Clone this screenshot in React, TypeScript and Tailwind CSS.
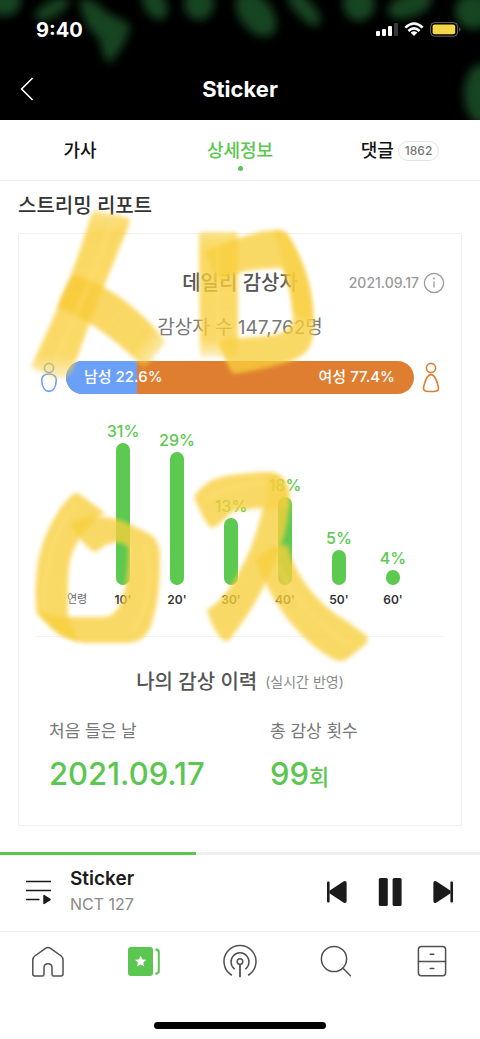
import { useState } from "react";
import type { ReactNode } from "react";

const TABS = [
  { id: "lyrics", label: "가사" },
  { id: "detail", label: "상세정보" },
  { id: "comments", label: "댓글", count: 1862 },
];

const AGES = [
  { age: "10'", percent: 31, height: 142 },
  { age: "20'", percent: 29, height: 133 },
  { age: "30'", percent: 13, height: 67 },
  { age: "40'", percent: 18, height: 88 },
  { age: "50'", percent: 5, height: 35 },
  { age: "60'", percent: 4, height: 15 },
];

const LISTENERS = { male: 22.6, female: 77.4 };

function HeaderBackdrop() {
  return (
    <svg
      className="absolute inset-0 h-full w-full"
      viewBox="0 0 480 120"
      preserveAspectRatio="none"
      aria-hidden="true"
    >
      <defs>
        <filter id="leaf-blur" x="-60%" y="-60%" width="220%" height="220%">
          <feGaussianBlur stdDeviation="5" />
        </filter>
      </defs>
      <g fill="#174520">
        <ellipse filter="url(#leaf-blur)" cx="4" cy="2" rx="17" ry="14" />
        <ellipse filter="url(#leaf-blur)" cx="52" cy="9" rx="19" ry="8" transform="rotate(-30 52 9)" />
        <path filter="url(#leaf-blur)" d="M80 -2 Q94 -2 106 12 L130 24 Q128 44 109 64 Q101 54 100 40 Q80 22 80 -2Z" />
        <ellipse filter="url(#leaf-blur)" cx="155" cy="4" rx="11" ry="17" transform="rotate(-30 155 4)" />
        <ellipse filter="url(#leaf-blur)" cx="199" cy="4" rx="15" ry="16" />
        <ellipse filter="url(#leaf-blur)" cx="256" cy="14" rx="16" ry="26" transform="rotate(-38 256 14)" />
        <ellipse filter="url(#leaf-blur)" cx="304" cy="8" rx="9" ry="23" transform="rotate(-42 304 8)" />
        <ellipse filter="url(#leaf-blur)" cx="359" cy="4" rx="16" ry="17" />
        <ellipse filter="url(#leaf-blur)" cx="410" cy="5" rx="23" ry="12" transform="rotate(-20 410 5)" />
        <ellipse filter="url(#leaf-blur)" cx="474" cy="11" rx="19" ry="18" />
        <ellipse filter="url(#leaf-blur)" cx="482" cy="94" rx="18" ry="30" />
      </g>
    </svg>
  );
}

function StatusBar() {
  return (
    <div className="relative flex h-[60px] items-center justify-between pr-[18px] pl-9 text-white">
      <span className="text-xl font-bold">9:40</span>
      <svg width="87" height="18" viewBox="375 21 87 18" aria-hidden="true">
        <g fill="currentColor">
          <rect x="376" y="31" width="4" height="5" rx="1" />
          <rect x="382" y="29" width="4" height="7" rx="1" />
          <rect x="388" y="26" width="4" height="10" rx="1" />
          <rect x="394" y="23" width="4" height="13" rx="1" opacity=".22" />
          <path d="M414 36 L410.6 32.6 Q414 29.9 417.4 32.6Z" />
        </g>
        <g fill="none" stroke="currentColor" strokeWidth="2.6">
          <path d="M405.3 27.6 Q414 19.4 422.7 27.6" />
          <path d="M408.4 31 Q414 25.8 419.6 31" />
        </g>
        <rect x="430.6" y="22.6" width="27" height="13.6" rx="4" fill="none" stroke="#fff" strokeOpacity=".4" />
        <rect x="432.6" y="24.6" width="22.6" height="9.6" rx="2" fill="#f5d646" />
        <path d="M459.4 27 Q461.4 29.4 459.4 31.8Z" fill="#fff" opacity=".5" />
      </svg>
    </div>
  );
}

function Person({ female }: { female?: boolean }) {
  return (
    <svg width="18" height="32" viewBox="0 0 18 32" fill="none" strokeWidth="1.6" aria-hidden="true">
      <circle cx="9" cy="6" r="4.6" stroke={female ? "#df7e30" : "#6a9ff8"} />
      {female ? (
        <path
          d="M9 12.6 C12.6 12.6 14.6 17 16.4 25 Q17 28.8 13.6 29.2 Q9 29.8 4.4 29.2 Q1 28.8 1.6 25 C3.4 17 5.4 12.6 9 12.6Z"
          stroke="#df7e30"
        />
      ) : (
        <path
          d="M9 12 C13.6 12 16.4 14.4 16.3 18 C16 24 13.6 29.4 9 29.4 C4.4 29.4 2 24 1.7 18 C1.6 14.4 4.4 12 9 12Z"
          stroke="#6a9ff8"
        />
      )}
    </svg>
  );
}

// Hand-drawn highlighter strokes lying over the report.
function Highlighter() {
  return (
    <svg
      className="pointer-events-none absolute top-0 left-0 w-full"
      viewBox="0 181 480 500"
      aria-hidden="true"
    >
      <defs>
        <filter id="marker-edge" x="-10%" y="-10%" width="120%" height="120%">
          <feGaussianBlur stdDeviation="2" />
        </filter>
        <linearGradient id="fade-down" x1="0" y1="0" x2="0" y2="1">
          <stop offset="0" stopColor="#f8cf3c" stopOpacity=".6" />
          <stop offset=".12" stopColor="#f8cf3c" stopOpacity=".8" />
          <stop offset=".86" stopColor="#f8cf3c" stopOpacity=".78" />
          <stop offset="1" stopColor="#f8cf3c" stopOpacity=".3" />
        </linearGradient>
        <linearGradient id="fade-right" x1="0" y1="0" x2="1" y2=".7">
          <stop offset="0" stopColor="#f9c430" stopOpacity=".75" />
          <stop offset=".3" stopColor="#f8cb38" stopOpacity=".78" />
          <stop offset=".88" stopColor="#f8cf3c" stopOpacity=".8" />
          <stop offset="1" stopColor="#f8cf3c" stopOpacity=".5" />
        </linearGradient>
      </defs>
      <g fill="#f8cf3c" fillOpacity=".79">
        <path filter="url(#marker-edge)" fill="url(#fade-down)" fillOpacity="1" d="M95 211 L127 217 Q131 219 129 225 C112 266 92 315 72 372 Q64 381 52 378 L31 367 C52 322 76 268 91 215 Q92 211 95 211Z" />
        <path filter="url(#marker-edge)" fill="url(#fade-right)" fillOpacity="1" d="M75 275 C108 286 136 305 163 338 Q166 342 163 345 L148 364 Q144 369 139 363 C116 340 92 322 58 307 Q64 288 75 275Z" />
        <path filter="url(#marker-edge)" fill="url(#fade-down)" fillOpacity="1" d="M203 232 H235 Q238 232 238 236 L238 352 Q237 357 233 357 H204 Q200 357 200 353 L199 236 Q199 232 203 232Z" />
        <path filter="url(#marker-edge)" d="M206 252 C222 243 246 235 264 231 Q280 229 286 233 C302 256 313 289 313 320 C316 349 305 357 285 363 C268 368 250 371 234 374 Q230 373 218 342 C240 336 262 338 278 334 Q294 330 293 314 C292 294 289 281 282 268 C258 268 240 271 217 280Z" />
        <path filter="url(#marker-edge)" fillOpacity=".6" d="M274 231 Q282 229 287 234 C302 256 314 289 313 324 Q305 318 293 312 C292 288 281 258 274 231Z" />
        <path filter="url(#marker-edge)" d="M73 494 Q77 492 81 495 L105 513 C88 522 76 541 70 560 C67 579 68 598 68 617 L78 640 Q59 638 49 626 L37 614 Q34 594 37 569 C41 538 57 508 73 494Z" />
        <path filter="url(#marker-edge)" d="M70 524 C86 514 106 515 123 521 L150 534 Q160 541 160 556 C160 576 159 598 154 615 C150 634 142 643 126 643 L84 643 C66 641 52 627 37 610 Q50 617 68 617 L104 617 Q114 616 120 605 C127 590 128 566 128 547 C119 539 108 541 96 552 Q86 550 70 524Z" />
        <path filter="url(#marker-edge)" d="M194 497 C202 485 212 479 221 477 C238 473 256 472 272 472 Q288 477 289 492 C290 514 286 534 278 554 C269 580 251 613 230 639 Q226 644 221 638 Q212 628 207 610 C220 602 231 588 240 570 C252 549 258 528 263 508 Q248 509 234 511 C226 516 220 525 213 528 Q207 529 194 497Z" />
        <path filter="url(#marker-edge)" fillOpacity=".45" d="M267 478 Q273 472 280 477 Q287 485 290 508 L266 510 Q266 493 267 478Z" />
        <path filter="url(#marker-edge)" d="M256 560 Q268 545 288 545 C292 570 316 604 345 620 L366 635 Q369 638 366 644 L347 659 Q340 663 333 659 C302 642 272 606 256 560Z" />
      </g>
      {/* bristle marks */}
      <g filter="url(#marker-edge)" stroke="#ffe88c" strokeWidth="3" fill="none" opacity=".3">
        <path d="M112 222 Q88 290 53 365" />
        <path d="M218 240 V350" />
        <path d="M45 610 Q40 550 75 505 M145 545 Q157 600 132 630" />
        <path d="M205 500 Q230 485 270 482 M278 565 Q303 620 352 645" />
      </g>
    </svg>
  );
}

function AgeChart() {
  return (
    <div className="mt-[27px] flex items-end px-[23px]">
      <span className="flex h-[29px] w-[54px] items-center justify-center pl-4 text-[11px] text-[#666]">연령</span>
      {AGES.map(({ age, percent, height }) => (
        <div key={age} className="flex w-[54px] flex-col items-center">
          <span className="text-base leading-5 font-medium text-[#5bc94f]">{percent}%</span>
          <div className="mt-0.5 w-[14px] rounded-full bg-[#5cc951]" style={{ height }} />
          <span className="flex h-[29px] items-center text-xs font-semibold text-[#333]">{age}</span>
        </div>
      ))}
    </div>
  );
}

function Stat({ label, children }: { label: string; children: ReactNode }) {
  return (
    <div>
      <dt className="text-[17px] leading-6 text-[#777]">{label}</dt>
      <dd className="mt-[11px] text-[31px] leading-10 font-medium text-[#5bc650]">{children}</dd>
    </div>
  );
}

function Report() {
  return (
    <section className="rounded-[1px] border border-[#f1f1f1] pb-7">
      <div className="grid grid-cols-[1fr_auto_1fr] items-center px-4 pt-[35px]">
        <h3 className="col-start-2 text-xl leading-7 font-medium text-[#555]">데일리 감상자</h3>
        <div className="flex items-center justify-end gap-1 text-sm font-medium text-[#999]">
          <time>2021.09.17</time>
          <button aria-label="안내">
            <svg width="22" height="22" viewBox="0 0 22 22" fill="none" stroke="#999" strokeWidth="1.3">
              <circle cx="11" cy="11" r="9.6" />
              <path d="M11 9.6 V15.6" />
              <circle cx="11" cy="6.6" r="1" fill="#999" stroke="none" />
            </svg>
          </button>
        </div>
      </div>
      <p className="mt-[17px] text-center text-[19px] leading-7 text-[#777]">감상자 수 147,762명</p>

      <div className="mt-[19px] flex items-center gap-2 px-[21px]">
        <Person />
        <div className="flex h-[33px] min-w-0 flex-1 overflow-hidden rounded-full bg-[#df7e30] text-[15px] font-medium whitespace-nowrap text-white">
          <div className="flex h-full items-center bg-[#6aa0f8] pl-[18px]" style={{ width: "20.4%" }}>
            <span>남성 {LISTENERS.male}%</span>
          </div>
          <span className="ml-auto flex items-center pr-[19px]">여성 {LISTENERS.female}%</span>
        </div>
        <Person female />
      </div>

      <AgeChart />

      <hr className="mx-[17px] mt-[22px] border-[#f4f4f4]" />

      <h3 className="mt-[31px] flex items-center justify-center gap-2 text-xl leading-7 font-medium text-[#555]">
        나의 감상 이력
        <span className="text-sm font-normal text-[#888]">(실시간 반영)</span>
      </h3>
      <dl className="mt-[23px] grid grid-cols-2 pl-[30px]">
        <Stat label="처음 들은 날">2021.09.17</Stat>
        <div className="pl-[15px]">
          <Stat label="총 감상 횟수">
            99<span className="text-[22px]">회</span>
          </Stat>
        </div>
      </dl>
    </section>
  );
}

function Player() {
  const [playing, setPlaying] = useState(true);
  return (
    <div>
      <div className="h-[3px] bg-[#efefef]">
        <div className="h-full bg-[#5bc650]" style={{ width: "40.8%" }} />
      </div>
      <div className="flex h-[77px] items-center border-b border-[#eee] pr-[26px] pb-[3px] pl-[25px] text-[#1b1b1b]">
        <button aria-label="재생목록">
          <svg width="27" height="26" viewBox="0 0 27 26" fill="none" stroke="currentColor" strokeWidth="1.5">
            <path d="M1 2.5 H26 M1 11.5 H26 M1 20.5 H14.5" />
            <path d="M19 16.6 L25 20.5 L19 24.4Z" fill="currentColor" strokeLinejoin="round" />
          </svg>
        </button>
        <div className="ml-[18px] flex flex-col gap-px">
          <span className="text-[19px] leading-6 font-semibold">Sticker</span>
          <span className="text-base leading-6 text-[#888]">NCT 127</span>
        </div>
        <div className="ml-auto flex items-center gap-[29px]">
          <button aria-label="이전 곡">
            <svg width="22" height="24" viewBox="0 0 22 24" fill="currentColor">
              <rect x="1" y="1.6" width="2.6" height="20.8" rx="1" />
              <path d="M3.4 10.7 L17.8 1.2 Q20.6 .2 20.6 3 V21 Q20.6 23.8 17.8 22.8 L3.4 13.3Z" />
            </svg>
          </button>
          <button aria-label={playing ? "일시정지" : "재생"} onClick={() => setPlaying(!playing)}>
            <svg width="26" height="30" viewBox="0 0 26 30" fill="currentColor">
              {playing ? (
                <>
                  <rect x="1.8" y="1" width="9" height="28" rx="1.6" />
                  <rect x="15.6" y="1" width="9" height="28" rx="1.6" />
                </>
              ) : (
                <path d="M3 1 L24 15 L3 29Z" />
              )}
            </svg>
          </button>
          <button aria-label="다음 곡">
            <svg width="22" height="24" viewBox="0 0 22 24" fill="currentColor">
              <rect x="18.4" y="1.6" width="2.6" height="20.8" rx="1" />
              <path d="M18.6 10.7 L4.2 1.2 Q1.4 .2 1.4 3 V21 Q1.4 23.8 4.2 22.8 L18.6 13.3Z" />
            </svg>
          </button>
        </div>
      </div>
    </div>
  );
}

const NAV_ITEMS = [
  {
    label: "홈",
    icon: (
      <path d="M3.6 33 Q1.8 33 1.8 31 V17 Q1.8 14.6 3.8 13 L14.4 5.4 Q17 3.8 19.6 5.4 L30.2 13 Q32 14.6 32 17 V31 Q32 33 30 33 H22.6 Q21 33 21 31.4 V25 Q21 20.8 17 20.8 Q13 20.8 13 25 V31.4 Q13 33 11.4 33Z" />
    ),
  },
  {
    label: "뮤직",
    icon: (
      <g stroke="none" fill="#5bc650">
        <rect x="1" y="4" width="25" height="29" rx="3" />
        <path d="M28.4 5.6 H29.8 Q32.8 6 32.8 9 V28.4 Q32.8 31.4 28.4 31.8 V29.8 Q30.8 29.6 30.8 27.6 V9.6 Q30.8 7.8 28.4 7.4Z" />
        <path
          fill="#fff"
          d="M13.6 12.6 L15.3 16.4 L19.3 16.8 L16.3 19.6 L17.2 23.6 L13.6 21.5 L10 23.6 L10.9 19.6 L7.9 16.8 L11.9 16.4Z"
        />
      </g>
    ),
  },
  {
    label: "라디오",
    icon: (
      <g strokeLinecap="round">
        <path d="M8.4 32 A16 16 0 1 1 25.6 32" />
        <path d="M11.4 25.8 A9 9 0 1 1 22.6 25.8" />
        <circle cx="17" cy="18.6" r="2.8" />
        <path d="M17 21.6 V33.4" strokeWidth="1.8" />
      </g>
    ),
  },
  {
    label: "검색",
    icon: (
      <g strokeLinecap="round">
        <circle cx="15" cy="16" r="12.6" />
        <path d="M23.8 25 L31.4 32.8" />
      </g>
    ),
  },
  {
    label: "보관함",
    icon: (
      <g strokeLinecap="round">
        <rect x="3.4" y="3.6" width="27.2" height="29.2" rx="3" />
        <path d="M3.4 18.4 H30.6" />
        <path d="M15.2 11.2 H18.8 M15.2 25.6 H18.8" />
      </g>
    ),
  },
];

function BottomNav() {
  return (
    <nav className="grid h-[58px] grid-cols-5">
      {NAV_ITEMS.map(({ label, icon }) => (
        <button key={label} aria-label={label} className="flex items-center justify-center">
          <svg width="34" height="36" viewBox="0 0 34 36" fill="none" stroke="#505050" strokeWidth="1.5">
            {icon}
          </svg>
        </button>
      ))}
    </nav>
  );
}

export default function App() {
  const [tab, setTab] = useState("detail");

  return (
    <div className="flex min-h-screen flex-col bg-white font-['Inter','Noto_Sans_CJK_KR',sans-serif] text-[#222]">
      <header className="relative overflow-hidden bg-black">
        <HeaderBackdrop />
        <StatusBar />
        <div className="relative grid h-[60px] grid-cols-[1fr_auto_1fr] items-center px-5 pb-[3px] text-white">
          <button aria-label="뒤로" className="justify-self-start">
            <svg width="14" height="24" viewBox="0 0 14 24" fill="none" stroke="currentColor" strokeWidth="1.6">
              <path d="M12.6 1 L1.6 12 L12.6 23" />
            </svg>
          </button>
          <h1 className="text-[22px] leading-7 font-bold">Sticker</h1>
        </div>
      </header>

      <nav className="grid h-[61px] grid-cols-3 border-b border-[#f0f0f0]">
        {TABS.map(({ id, label, count }) => (
          <button
            key={id}
            onClick={() => setTab(id)}
            className={`relative flex items-center justify-center gap-1 pt-px text-lg font-medium ${
              tab === id ? "text-[#5bc650]" : "text-[#111]"
            }`}
          >
            {label}
            {count && (
              <span className="rounded-full border border-[#e4e4e4] px-1.5 text-xs leading-[18px] text-[#777]">
                {count}
              </span>
            )}
            {tab === id && <span className="absolute bottom-[9px] h-[5px] w-[5px] rounded-full bg-[#5bc650]" />}
          </button>
        ))}
      </nav>

      <main className="relative flex-1 px-[18px] pb-[25px]">
        <h2 className="pt-[11px] pb-[13px] text-xl leading-7 font-medium text-[#333]">스트리밍 리포트</h2>
        <Report />
        <Highlighter />
      </main>

      <Player />
      <BottomNav />
      <div className="flex h-[49px] items-end justify-center pb-2.5">
        <div className="h-[7px] w-[172px] rounded-full bg-black" />
      </div>
    </div>
  );
}
